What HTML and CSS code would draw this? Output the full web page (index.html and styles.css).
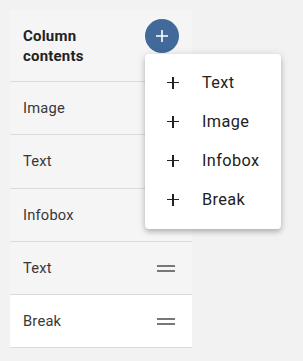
FILE: index.html
```html
<!DOCTYPE html>
<html lang="en">
<head>
    <meta charset="UTF-8">
    <meta name="viewport" content="width=device-width, initial-scale=1.0">
    <title>Column contents</title>
    <link rel="stylesheet" href="styles.css">
</head>
<body>
    <div class="panel">
        <!-- Header with add button -->
        <div class="panel-header">
            <h3 class="panel-title">Column<br>contents</h3>
            <div class="add-wrap">
                <button class="fab" type="button">
                    <svg width="14" height="14" viewBox="0 0 14 14">
                        <path d="M7 1v12M1 7h12" stroke="#fff" stroke-width="1.6" fill="none"/>
                    </svg>
                </button>

                <!-- Add menu -->
                <ul class="add-menu">
                    <li class="menu-item"><span class="menu-plus"></span>Text</li>
                    <li class="menu-item"><span class="menu-plus"></span>Image</li>
                    <li class="menu-item"><span class="menu-plus"></span>Infobox</li>
                    <li class="menu-item"><span class="menu-plus"></span>Break</li>
                </ul>
            </div>
        </div>

        <!-- Content rows -->
        <div class="row"><span class="row-label">Image</span><span class="handle"></span></div>
        <div class="row"><span class="row-label">Text</span><span class="handle"></span></div>
        <div class="row"><span class="row-label">Infobox</span><span class="handle"></span></div>
        <div class="row"><span class="row-label">Text</span><span class="handle"></span></div>
        <div class="row selected"><span class="row-label">Break</span><span class="handle"></span></div>
    </div>
</body>
</html>
```

FILE: styles.css
```css
* {
    margin: 0;
    padding: 0;
    box-sizing: border-box;
}

body {
    font-family: Roboto, "Noto Sans", Arial, sans-serif;
    background-color: #f2f2f2;
    padding: 10px;
}

.panel {
    width: 182px;
    background-color: #f5f5f5;
}

.panel-header {
    display: flex;
    justify-content: space-between;
    align-items: flex-start;
    height: 72px;
    padding: 16px 13px 0 13px;
    border-bottom: 1px solid #dcdcdc;
}

.panel-title {
    font-size: 15px;
    font-weight: bold;
    line-height: 20px;
    letter-spacing: 0.2px;
    color: #222;
}

.add-wrap {
    position: relative;
    margin-top: -7px;
}

.fab {
    width: 34px;
    height: 34px;
    border: none;
    border-radius: 50%;
    background-color: #41699a;
    display: flex;
    align-items: center;
    justify-content: center;
    cursor: pointer;
}

.add-menu {
    position: absolute;
    top: 35px;
    left: 0;
    width: 136px;
    list-style: none;
    background-color: #fff;
    border-radius: 4px;
    padding: 9px 0 10px;
    box-shadow: 0 3px 5px rgba(0, 0, 0, 0.2), 0 1px 10px rgba(0, 0, 0, 0.12);
    z-index: 10;
}

.menu-item {
    display: flex;
    align-items: center;
    height: 39px;
    padding-left: 22px;
    font-size: 16.3px;
    letter-spacing: 0.4px;
    color: #222;
}

/* plus drawn with two bars */
.menu-plus {
    position: relative;
    width: 12px;
    height: 12px;
    margin-right: 23px;
    flex-shrink: 0;
}

.menu-plus::before,
.menu-plus::after {
    content: "";
    position: absolute;
    background-color: #222;
}

.menu-plus::before {
    left: 0;
    top: 5.25px;
    width: 12px;
    height: 1.5px;
}

.menu-plus::after {
    left: 5.25px;
    top: 0;
    width: 1.5px;
    height: 12px;
}

.row {
    display: flex;
    justify-content: space-between;
    align-items: center;
    height: 53.3px;
    padding: 0 17px 0 13px;
    border-bottom: 1px solid #dcdcdc;
}

.row.selected {
    background-color: #fff;
}

.row-label {
    font-size: 14.7px;
    letter-spacing: 0.2px;
    color: #383838;
}

.handle {
    width: 18px;
    height: 7px;
    border-top: 2px solid #777;
    border-bottom: 2px solid #777;
}
```
